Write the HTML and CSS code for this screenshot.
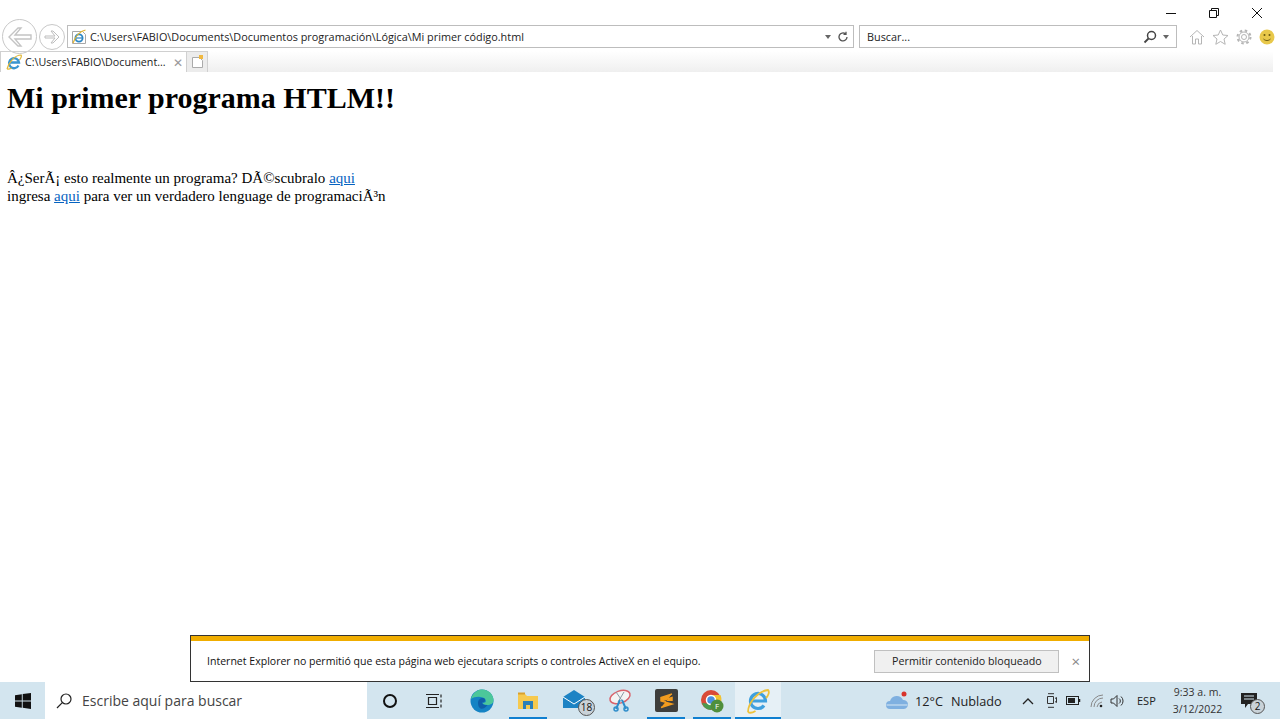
FILE: index.html
```html
<!DOCTYPE html>
<html lang="es">
<head>
  <meta charset="UTF-8" />
  <title>Mi primer programa HTLM</title>
  <link rel="stylesheet" href="styles.css">
</head>
<body>
  <div class="ventana">
    <header class="barra-ie">
      <div class="controles">
        <svg width="12" height="12" viewBox="0 0 12 12"><path d="M1 6.5h10" stroke="#111" fill="none"/></svg>
        <svg width="12" height="12" viewBox="0 0 12 12"><path d="M1.5 3.5h7v7h-7zM3.5 3.5v-2h7v7h-2" stroke="#111" fill="none"/></svg>
        <svg width="12" height="12" viewBox="0 0 12 12"><path d="M1 1l10 10M11 1L1 11" stroke="#111" fill="none"/></svg>
      </div>
      <div class="navegacion">
        <div class="flechas">
          <span class="circulo grande"><svg width="24" height="22" viewBox="0 0 24 22"><path d="M10 2L1 11l9 9h3l-6-7h16V9H7l6-7z" fill="none" stroke="#c4c4c4" stroke-width="1.4"/></svg></span>
          <span class="circulo"><svg width="16" height="14" viewBox="0 0 16 14"><path d="M9 1l6 6-6 6H7l4-5H1V6h10L7 1z" fill="none" stroke="#bdbdbd"/></svg></span>
        </div>
        <div class="caja direccion">
          <svg width="16" height="16" viewBox="0 0 16 16"><path d="M1.5 2.5h10l3 3v9h-13z" fill="#fff" stroke="#a8a8a8"/><circle cx="8" cy="9" r="3.6" fill="none" stroke="#2b86c5" stroke-width="1.8"/><path d="M4.5 9h7" stroke="#2b86c5" stroke-width="1.2"/><path d="M2 14C5 6 10 2 14.5 1" fill="none" stroke="#e2b52f" stroke-width="1.2"/></svg>
          <span class="url">C:\Users\FABIO\Documents\Documentos programación\Lógica\Mi primer código.html</span>
          <span class="triangulo"></span>
          <svg width="12" height="12" viewBox="0 0 12 12"><path d="M10 6a4 4 0 1 1-1.5-3.200M9 .8v2.500H6.500" fill="none" stroke="#555" stroke-width="1.3"/></svg>
        </div>
        <div class="caja busqueda">
          <span class="url">Buscar...</span>
          <svg width="14" height="14" viewBox="0 0 14 14"><circle cx="8.5" cy="5.5" r="4" fill="none" stroke="#444" stroke-width="1.5"/><path d="M5.5 8.5L1.5 12.5" stroke="#444" stroke-width="1.8"/></svg>
          <span class="triangulo"></span>
        </div>
        <div class="herramientas">
          <svg width="16" height="16" viewBox="0 0 16 16"><path d="M1 8l7-6.500L15 8M3.5 7v8h3v-5h3v5h3V7" fill="none" stroke="#b5b5b5"/></svg>
          <svg width="17" height="16" viewBox="0 0 17 16"><path d="M8.5 1l2.300 5 5.200.5-4 3.500 1.200 5.300-4.700-2.800-4.700 2.800L5 10 1 6.500 6.200 6z" fill="none" stroke="#b5b5b5"/></svg>
          <svg width="16" height="16" viewBox="0 0 16 16"><circle cx="8" cy="8" r="2.5" fill="none" stroke="#b5b5b5"/><circle cx="8" cy="8" r="5" fill="none" stroke="#b5b5b5"/><circle cx="8" cy="8" r="6.5" fill="none" stroke="#b5b5b5" stroke-width="2" stroke-dasharray="2.5 2.6"/></svg>
          <svg width="16" height="16" viewBox="0 0 16 16"><circle cx="8" cy="8" r="7.5" fill="#e8c84a"/><circle cx="5.5" cy="6" r="1" fill="#6b5a10"/><circle cx="10.5" cy="6" r="1" fill="#6b5a10"/><path d="M4.5 10c2 2 5 2 7 0" fill="none" stroke="#6b5a10"/></svg>
        </div>
      </div>
      <div class="fila-pestanas">
        <div class="pestana">
          <svg width="16" height="16" viewBox="0 0 16 16"><path d="M12.5 11.5A5 5 0 1 1 13 8.500H4" fill="none" stroke="#3a95d0" stroke-width="2.3"/><path d="M1 15C3 8 9 1 15 1c1 1 0 3-1.500 5M1 15c1.500.5 3 0 4.500-1" fill="none" stroke="#e0b83a" stroke-width="1.2"/></svg>
          <span class="titulo-pestana">C:\Users\FABIO\Document...</span>
          <span class="cerrar-pestana">✕</span>
        </div>
        <div class="pestana-nueva">
          <svg width="13" height="14" viewBox="0 0 13 14"><path d="M1.5 2.5h7l3 3v7h-10z" fill="#fff" stroke="#aaa"/><path d="M8 0h4v4H8z" fill="#f0b840"/></svg>
        </div>
        <div class="resto-pestanas"></div>
      </div>
    </header>

    <main class="contenido">
      <h1>Mi primer programa HTLM!!</h1>
      <p>Â¿SerÃ¡ esto realmente un programa? DÃ©scubralo <a href="#">aqui</a><br>
      ingresa <a href="#">aqui</a> para ver un verdadero lenguage de programaciÃ³n</p>
    </main>

    <footer class="taskbar">
      <div class="inicio">
        <svg width="16" height="16" viewBox="0 0 16 16"><path d="M0 2.200l6.800-1v6.300H0zM7.700 1.100L16 0v7.500H7.700zM0 8.400h6.800v6.400l-6.800-1zM7.700 8.400H16V16l-8.300-1.200z" fill="#111"/></svg>
      </div>
      <div class="buscador">
        <svg width="18" height="18" viewBox="0 0 18 18"><circle cx="11" cy="7" r="5" fill="none" stroke="#222" stroke-width="1.2"/><path d="M7.300 10.700L2 16" stroke="#222" stroke-width="1.2"/></svg>
        <span>Escribe aquí para buscar</span>
      </div>
      <div class="apps">
        <span class="app"><svg width="16" height="16" viewBox="0 0 16 16"><circle cx="8" cy="8" r="6" fill="none" stroke="#111" stroke-width="2"/></svg></span>
        <span class="app"><svg class="vista-tareas" width="18" height="16" viewBox="0 0 18 16"><path d="M3.5 4.500h8v7h-8zM1 1.500h13M1 14.500h13M16 1.500v3M16 6.500v3M16 11.500v3" fill="none" stroke="#222" stroke-width="1.2"/></svg></span>
        <span class="app"><svg width="24" height="24" viewBox="0 0 24 24"><circle cx="12" cy="12" r="11.5" fill="#1583c4"/><path d="M1 10C3 3 8 .5 12 .5c7 0 11.500 5 11.500 11 0 3-3 4.500-6 4.500-3 0-5-1-5-2.500 3 1 4-1 3-3-1.500-3-10-4-14.500-.5z" fill="#4cc79a"/><path d="M8 14c0-3 2-5 5-5 1.500 0 2.500 1.500 2 3-.5 1-2 1.500-3 1.500 0 2 3 3 5.500 2.500-2 3-5 4.500-7 3.500-2-1-2.500-3.500-2.500-5.500z" fill="#0f5fa8"/></svg></span>
        <span class="app activa"><svg width="22" height="20" viewBox="0 0 22 20"><path d="M1 3h7l2 2h11v13H1z" fill="#f6c94e"/><path d="M1 1.500h7v2H1z" fill="#d9a02e"/><path d="M6 10h10v8h-3v-4H9v4H6z" fill="#2b7fb8"/></svg></span>
        <span class="app"><svg class="correo" width="24" height="20" viewBox="0 0 24 20"><path d="M1 8l11-7 11 7v11H1z" fill="#1d83c4"/><path d="M1 8l11 7 11-7" fill="none" stroke="#fff"/></svg><b class="insignia">18</b></span>
        <span class="app"><svg width="24" height="24" viewBox="0 0 24 24"><ellipse cx="12" cy="8" rx="10.5" ry="6" fill="#f4f4f4" stroke="#d9636c" stroke-width="1.5" transform="rotate(-20 12 8)"/><path d="M8 3l7 10M16 3l-6 10" stroke="#8a9aa5"/><path d="M14 11l4 9M12 11l-4 9" stroke="#2f8dca" stroke-width="2"/><circle cx="18" cy="20" r="2" fill="none" stroke="#2f8dca" stroke-width="1.5"/><circle cx="8" cy="20" r="2" fill="none" stroke="#2f8dca" stroke-width="1.5"/></svg></span>
        <span class="app activa"><svg width="23" height="23" viewBox="0 0 23 23"><rect width="23" height="23" rx="2" fill="#3e3e3c"/><path d="M17 5L6 8.500v3.500l11 3-11 3.500M6 12l11-3.500v3.500" fill="#f29c1f" stroke="#f29c1f" stroke-width="1.5"/></svg></span>
        <span class="app activa"><svg width="24" height="24" viewBox="0 0 24 24"><circle cx="11" cy="11" r="10" fill="#d94a38"/><path d="M2 14a10 10 0 0 0 9 7l5-8-5 2z" fill="#4a9a50"/><path d="M11 6h9.500a10 10 0 0 1-2 11L14 11z" fill="#f2c230"/><circle cx="11" cy="11" r="4.5" fill="#4a8fe0" stroke="#fff" stroke-width="1.5"/><circle cx="17" cy="17" r="6.5" fill="#4f8f3c"/><text x="17" y="20" class="letra-f">F</text></svg></span>
        <span class="app abierta"><svg width="26" height="26" viewBox="0 0 26 26"><path d="M19 17.500A7.500 7.500 0 1 1 20.500 13H7" fill="none" stroke="#3fa0de" stroke-width="3.2"/><path d="M3 24C3 15 13 3 23 2c2 2 0 6-2 8M3 24c2 1.500 5 .5 7.500-1" fill="none" stroke="#edc23c" stroke-width="1.8"/></svg></span>
      </div>
      <div class="bandeja">
        <div class="clima">
          <svg width="24" height="20" viewBox="0 0 24 20"><path d="M5 18a4 4 0 0 1 0-8 7 7 0 0 1 13-1 4.500 4.500 0 0 1 1 9z" fill="#7fb0e0"/><path d="M1.5 14h21" stroke="#d8e8f4"/><circle cx="19" cy="3" r="2.5" fill="#d8342c"/></svg>
          <span>12°C</span>
          <span>Nublado</span>
        </div>
        <div class="iconos-bandeja">
          <svg width="12" height="8" viewBox="0 0 12 8"><path d="M1 7l5-5 5 5" fill="none" stroke="#222" stroke-width="1.3"/></svg>
          <svg class="camara" width="11" height="15" viewBox="0 0 11 15"><path d="M2 .7h6M2 14.300h6M1.500 3.500h6v7h-6zM9 5.500l1.500-1v5L9 8.500" fill="none" stroke="#333"/></svg>
          <svg width="15" height="9" viewBox="0 0 15 9"><rect x=".5" y=".5" width="12" height="8" fill="none" stroke="#222"/><rect x="2" y="2" width="7" height="5" fill="#222"/><path d="M13.5 3v3" stroke="#222" stroke-width="1.5"/></svg>
          <svg class="wifi" width="14" height="14" viewBox="0 0 14 14"><path d="M1 13A12 12 0 0 1 13 1M4 13a9 9 0 0 1 9-9M7 13a6 6 0 0 1 5-5" fill="none" stroke="#888"/><circle cx="11" cy="12" r="1.3" fill="#222"/></svg>
          <svg width="15" height="14" viewBox="0 0 15 14"><path d="M1 5h2.500L7 1.500v11L3.500 9H1zM9 4.500a3 3 0 0 1 0 5M11 2.500a6 6 0 0 1 0 9" fill="none" stroke="#333"/></svg>
          <span class="idioma">ESP</span>
        </div>
        <div class="reloj">
          <span>9:33 a. m.</span>
          <span>3/12/2022</span>
        </div>
        <div class="avisos">
          <svg width="16" height="15" viewBox="0 0 16 15"><path d="M0 0h16v11H7l-3 4v-4H0z" fill="#222"/><path d="M3 3h10M3 6h10" stroke="#d3e5ef"/></svg>
          <b class="insignia aviso">2</b>
        </div>
      </div>
    </footer>

    <div class="notificacion">
      <p>Internet Explorer no permitió que esta página web ejecutara scripts o controles ActiveX en el equipo.</p>
      <button>Permitir contenido bloqueado</button>
      <span class="cerrar-aviso">×</span>
    </div>
  </div>
</body>
</html>
```

FILE: styles.css
```css
body {
  margin: 0;
  background-color: white;
  font-family: "Open Sans", sans-serif;
}
.ventana {
  position: relative;
  display: flex;
  flex-direction: column;
  height: 719px;
  overflow: hidden;
}

/* barra del navegador */
.barra-ie {
  height: 72px;
  flex: none;
  display: flex;
  flex-direction: column;
}
.controles {
  display: flex;
  justify-content: flex-end;
  gap: 31px;
  height: 25px;
  padding: 7px 17px 0 0;
  box-sizing: border-box;
}
.navegacion {
  display: flex;
  align-items: center;
  height: 23px;
  padding-left: 2px;
}
.flechas {
  display: flex;
  align-items: center;
  gap: 2px;
  width: 65px;
  flex: none;
}
.circulo {
  display: flex;
  align-items: center;
  justify-content: center;
  flex: none;
  width: 24px;
  height: 24px;
  border: 1px solid #c8c8c8;
  border-radius: 50%;
}
.circulo.grande {
  width: 33px;
  height: 33px;
}
.caja {
  display: flex;
  align-items: center;
  gap: 6px;
  height: 23px;
  box-sizing: border-box;
  border: 1px solid #bdbdbd;
  font-size: 10.85px;
  color: #222;
}
.direccion {
  width: 787px;
  padding: 0 4px 0 3px;
}
.busqueda {
  width: 318px;
  margin-left: 5px;
  padding: 0 7px;
}
.url {
  flex: 1;
  white-space: nowrap;
}
.direccion .url {
  margin-left: -3px;
}
.triangulo {
  width: 0;
  height: 0;
  border-left: 3.5px solid transparent;
  border-right: 3.5px solid transparent;
  border-top: 4px solid #666;
}
.herramientas {
  display: flex;
  align-items: center;
  gap: 7px;
  margin-left: 12px;
}
.fila-pestanas {
  display: flex;
  height: 21px;
  margin-top: 3px;
}
.pestana {
  display: flex;
  align-items: center;
  gap: 3px;
  width: 187px;
  box-sizing: border-box;
  padding-left: 5px;
  border: 1px solid #d0d0d0;
  border-bottom: none;
  font-size: 10.7px;
  color: #222;
}
.titulo-pestana {
  white-space: nowrap;
  width: 145px;
}
.cerrar-pestana {
  font-size: 12px;
  color: #999;
}
.pestana-nueva {
  display: flex;
  align-items: center;
  justify-content: center;
  width: 20px;
  background-color: #ececec;
  border: 1px solid #d0d0d0;
  border-left: none;
  border-bottom: none;
}
.resto-pestanas {
  width: 1065px;
  background: linear-gradient(#ffffff, #efefef);
}

/* contenido de la pagina */
.contenido {
  flex: 1;
  padding: 9px 8px 0 7px;
  font-family: "Liberation Serif", serif;
  font-size: 15px;
  color: black;
}
.contenido h1 {
  margin: 0 0 54px 0;
  font-size: 30px;
  line-height: 34px;
}
.contenido p {
  margin: 0;
  line-height: 18px;
}
.contenido a {
  color: #0563c1;
}

/* aviso de activex */
.notificacion {
  position: absolute;
  left: 190px;
  top: 635px;
  width: 900px;
  height: 47px;
  box-sizing: border-box;
  display: flex;
  align-items: center;
  padding: 5px 9px 0 16px;
  background-color: white;
  border: 1px solid #333;
  font-size: 10.55px;
  color: #111;
}
.notificacion::before {
  content: "";
  position: absolute;
  left: 0;
  right: 0;
  top: 0;
  height: 5px;
  background-color: #f0ad00;
}
.notificacion p {
  margin: 0;
  flex: 1;
}
.notificacion button {
  width: 185px;
  height: 23px;
  padding: 0;
  background-color: #f0f0f0;
  border: 1px solid #c0c0c0;
  font-family: inherit;
  font-size: 10.7px;
  color: #222;
}
.cerrar-aviso {
  margin-left: 12px;
  font-size: 15px;
  color: #888;
}

/* barra de tareas */
.taskbar {
  display: flex;
  align-items: stretch;
  height: 37px;
  flex: none;
  background-color: #d3e5ef;
  color: #222;
}
.inicio {
  display: flex;
  align-items: center;
  justify-content: center;
  width: 45px;
  flex: none;
}
.buscador {
  display: flex;
  align-items: center;
  gap: 9px;
  width: 322px;
  flex: none;
  box-sizing: border-box;
  padding-left: 10px;
  background-color: white;
  font-size: 14px;
  color: #444;
}
.apps {
  display: flex;
  width: 414px;
  flex: none;
}
.app {
  position: relative;
  display: flex;
  align-items: center;
  justify-content: center;
  width: 46px;
  box-sizing: border-box;
}
.app.activa::after,
.app.abierta::after {
  content: "";
  position: absolute;
  left: 4px;
  right: 4px;
  bottom: 0;
  height: 2px;
  background-color: #0f7fd0;
}
.app.abierta {
  background-color: #e6f0f6;
}
.app.abierta::after {
  left: 0;
  right: 0;
}
.vista-tareas {
  margin-right: 4px;
}
.correo {
  margin-bottom: 3px;
}
.insignia {
  position: absolute;
  right: 2px;
  bottom: 3px;
  width: 17px;
  height: 17px;
  line-height: 15px;
  border-radius: 50%;
  background-color: #c9d2d8;
  border: 1px solid #555;
  box-sizing: border-box;
  text-align: center;
  font-size: 10px;
  font-weight: normal;
  color: #111;
}
.letra-f {
  font-size: 8px;
  fill: white;
  text-anchor: middle;
}
.bandeja {
  flex: 1;
  display: flex;
  align-items: center;
  padding-left: 104px;
  font-size: 12.7px;
}
.clima {
  display: flex;
  align-items: center;
  gap: 6px;
  width: 137px;
  flex: none;
}
.clima span + span {
  margin-left: 2px;
}
.iconos-bandeja {
  display: flex;
  align-items: center;
  gap: 9px;
  width: 147px;
  flex: none;
}
.camara {
  margin-left: 3px;
}
.wifi {
  margin-right: -3px;
}
.idioma {
  margin-left: 3px;
  font-size: 11px;
}
.reloj {
  display: flex;
  flex-direction: column;
  align-items: center;
  gap: 3px;
  width: 57px;
  flex: none;
  font-size: 10.5px;
  color: #333;
}
.avisos {
  position: relative;
  margin-left: 15px;
  display: flex;
}
.insignia.aviso {
  right: -8px;
  bottom: -6px;
  width: 15px;
  height: 15px;
  line-height: 13px;
}
```
